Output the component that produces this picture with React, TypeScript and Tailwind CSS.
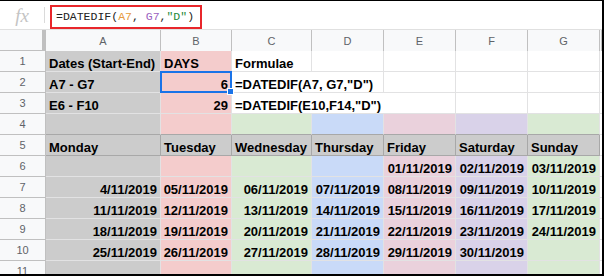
import React from 'react';

const colBg = ['bg-[#cccccc]', 'bg-[#f4cccc]', 'bg-[#d9ead3]', 'bg-[#c9daf8]', 'bg-[#ead1dc]', 'bg-[#d9d2e9]', 'bg-[#d9ead3]'];

type Cell = { text?: string; right?: boolean; span?: number; bg?: string };

const W = 'bg-white';
const G = 'bg-[#cccccc]';

const rows: Cell[][] = [
  [{ text: 'Dates (Start-End)', bg: G }, { text: 'DAYS', bg: colBg[1] }, { text: 'Formulae', bg: W }, { bg: W }, { bg: W }, { bg: W }, { bg: W }],
  [{ text: 'A7 - G7', bg: G }, { text: '6', right: true, bg: colBg[1] }, { text: '=DATEDIF(A7, G7,"D")', span: 2, bg: W }, { bg: W }, { bg: W }, { bg: W }],
  [{ text: 'E6 - F10', bg: G }, { text: '29', right: true, bg: colBg[1] }, { text: '=DATEDIF(E10,F14,"D")', span: 3, bg: W }, { bg: W }, { bg: W }],
  colBg.map((bg) => ({ bg })),
  ['Monday', 'Tuesday', 'Wednesday', 'Thursday', 'Friday', 'Saturday', 'Sunday'].map((d) => ({ text: d, bg: G })),
  ['', '', '', '', '01/11/2019', '02/11/2019', '03/11/2019'].map((t, i) => ({ text: t, right: true, bg: colBg[i] })),
  ['4/11/2019', '05/11/2019', '06/11/2019', '07/11/2019', '08/11/2019', '09/11/2019', '10/11/2019'].map((t, i) => ({ text: t, right: true, bg: colBg[i] })),
  ['11/11/2019', '12/11/2019', '13/11/2019', '14/11/2019', '15/11/2019', '16/11/2019', '17/11/2019'].map((t, i) => ({ text: t, right: true, bg: colBg[i] })),
  ['18/11/2019', '19/11/2019', '20/11/2019', '21/11/2019', '22/11/2019', '23/11/2019', '24/11/2019'].map((t, i) => ({ text: t, right: true, bg: colBg[i] })),
  ['25/11/2019', '26/11/2019', '27/11/2019', '28/11/2019', '29/11/2019', '30/11/2019', ''].map((t, i) => ({ text: t, right: true, bg: colBg[i] })),
  colBg.map((bg) => ({ bg })),
];

const spanCls = ['', '', 'col-span-2', 'col-span-3'];

export default function App() {
  return (
    <div className="w-[604px] h-[276px] overflow-hidden bg-white border-t border-r-2 border-b-2 border-black font-['Liberation_Sans',Arial,sans-serif]">
      {/* formula bar */}
      <div className="h-[29px] flex items-center border-b border-[#e0e0e0]">
        <div className="w-[44px] flex justify-center pt-[1px]">
          <span className="font-['Liberation_Serif',serif] italic text-[19px] leading-none text-[#c4c4c4]">fx</span>
        </div>
        <div className="w-px h-[16px] bg-[#dadada]" />
        <div className="ml-[5px] mt-[4px] h-[24px] w-[152px] border-2 border-[#e8262b] flex items-center pl-[4px] font-['Liberation_Mono',monospace] text-[11.5px] text-[#222]">
          <span>=DATEDIF(</span>
          <span className="text-[#e69a3c]">A7</span>
          <span>,&nbsp;</span>
          <span className="text-[#9a5fbf]">G7</span>
          <span>,</span>
          <span className="text-[#1f8a3a]">"D"</span>
          <span>)</span>
        </div>
      </div>

      <div className="grid grid-cols-[46px_115px_71px_80px_72px_72px_72px_72px_1fr] auto-rows-[21px]">
        {/* header row */}
        <div className="h-[24px] bg-[#f8f9fa] border-r-4 border-b-4 border-[#c0c0c0]" />
        {['A', 'B', 'C', 'D', 'E', 'F', 'G', ''].map((c, i) => (
          <div key={i} className="h-[24px] bg-[#f8f9fa] border-r border-b border-[#c0c0c0] flex items-center justify-center text-[11px] text-[#5f6368]">
            {c}
          </div>
        ))}

        {rows.map((row, r) => (
          <React.Fragment key={r}>
            <div className="bg-[#f8f9fa] border-r border-b border-[#c0c0c0] flex items-center justify-center text-[11px] text-[#5f6368]">
              {r + 1}
            </div>
            {row.map((cell, c) => (
              <div
                key={c}
                className={`relative flex items-end whitespace-nowrap border-r border-b ${r === 4 ? 'border-[#a8a8a8]' : r === 3 ? 'border-r-[#e2e2e3] border-b-[#a8a8a8]' : 'border-[#e2e2e3]'} ${cell.bg} ${spanCls[cell.span ?? 0]} ${cell.right ? 'justify-end pr-[3px]' : 'pl-[3px]'}`}
              >
                <span className="text-[13px] leading-[15px] font-bold text-black">{cell.text}</span>
                {r === 1 && c === 1 && (
                  <>
                    <div className="absolute z-10 -top-px -left-px -right-px -bottom-px border-2 border-[#1a73e8]" />
                    <div className="absolute z-10 -right-[3px] -bottom-[3px] w-[7px] h-[7px] bg-[#1a73e8] border border-white" />
                  </>
                )}
              </div>
            ))}
            <div className="bg-white border-b border-[#e2e2e3]" />
          </React.Fragment>
        ))}
      </div>
    </div>
  );
}
